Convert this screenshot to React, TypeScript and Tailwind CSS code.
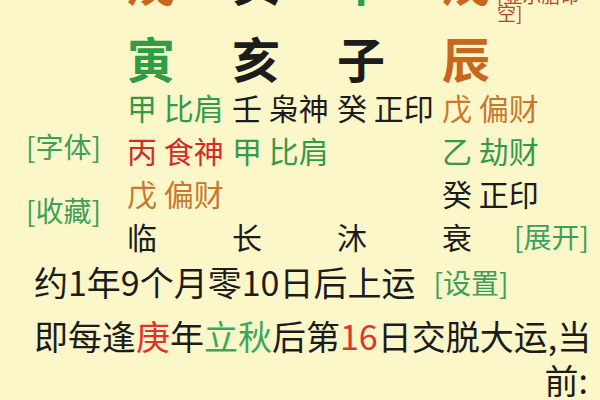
import React from "react";

const FONT = { fontFamily: '"Noto Sans CJK SC", "Noto Sans", sans-serif' };

type Cell = { s: string; sc: string; g?: string; gc?: string };

const tenRows: (Cell | null)[][] = [
  [
    { s: "甲", sc: "text-[#36994a]", g: "比肩", gc: "text-[#36994a]" },
    { s: "壬", sc: "text-[#1c1c1c]", g: "枭神", gc: "text-[#1c1c1c]" },
    { s: "癸", sc: "text-[#1c1c1c]", g: "正印", gc: "text-[#1c1c1c]" },
    { s: "戊", sc: "text-[#c8782e]", g: "偏财", gc: "text-[#c8782e]" },
  ],
  [
    { s: "丙", sc: "text-[#d12b2b]", g: "食神", gc: "text-[#d12b2b]" },
    { s: "甲", sc: "text-[#36994a]", g: "比肩", gc: "text-[#36994a]" },
    null,
    { s: "乙", sc: "text-[#36994a]", g: "劫财", gc: "text-[#36994a]" },
  ],
  [
    { s: "戊", sc: "text-[#c8782e]", g: "偏财", gc: "text-[#c8782e]" },
    null,
    null,
    { s: "癸", sc: "text-[#1c1c1c]", g: "正印", gc: "text-[#1c1c1c]" },
  ],
];

function TenCell({ c }: { c: Cell | null }) {
  return (
    <div className="w-[105px] shrink-0 whitespace-nowrap">
      {c ? (
        <>
          <span className={c.sc}>{c.s}</span>
          <span className={c.gc}> {c.g}</span>
        </>
      ) : null}
    </div>
  );
}

export default function App() {
  return (
    <div
      className="w-[600px] h-[400px] overflow-hidden bg-[#fbf7c9] text-[#1c1c1c]"
      style={FONT}
    >
      <div className="flex">
        {/* left labels */}
        <div className="w-[127px] shrink-0 flex flex-col pl-[26px] text-[28px] leading-[32px] text-[#3c9f5c]">
          <div className="mt-[130px]">[字体]</div>
          <div className="mt-[32px]">[收藏]</div>
        </div>

        {/* pillars */}
        <div className="flex flex-col">
          {/* stems row (cut off at top) */}
          <div className="flex mt-[-44px] h-[48px] text-[48px] leading-[48px] font-bold">
            <div className="w-[105px] shrink-0 text-[#c8661e]">戊</div>
            <div className="w-[105px] shrink-0 text-[#1c1c1c]">癸</div>
            <div className="w-[105px] shrink-0 text-[#2f9c46]">甲</div>
            <div className="w-[55px] shrink-0 text-[#c8661e]">戊</div>
            <div className="w-[96px] mt-[30px] text-[19px] leading-[18px] font-normal text-[#b8442a]">
              [显示胎命空]
            </div>
          </div>

          {/* branches row */}
          <div className="flex mt-[29px] h-[48px] text-[48px] leading-[48px] font-bold">
            <div className="w-[105px] shrink-0 text-[#2f9c46]">寅</div>
            <div className="w-[105px] shrink-0 text-[#1c1c1c]">亥</div>
            <div className="w-[105px] shrink-0 text-[#1c1c1c]">子</div>
            <div className="w-[105px] shrink-0 text-[#c8661e]">辰</div>
          </div>

          {/* ten gods rows */}
          <div className="flex flex-col mt-[5px] text-[30px] leading-[43px]">
            {tenRows.map((row, i) => (
              <div key={i} className="flex h-[43px]">
                {row.map((c, j) => (
                  <TenCell key={j} c={c} />
                ))}
              </div>
            ))}
            <div className="flex h-[43px] text-[#1c1c1c]">
              <div className="w-[105px] shrink-0">临</div>
              <div className="w-[105px] shrink-0">长</div>
              <div className="w-[105px] shrink-0">沐</div>
              <div className="w-[72px] shrink-0">衰</div>
              <div className="text-[28px] text-[#3c9f5c] whitespace-nowrap">[展开]</div>
            </div>
          </div>
        </div>
      </div>

      {/* bottom text */}
      <div className="pl-[34px] pr-[10px]">
        <div className="flex items-center h-[48px] whitespace-nowrap">
          <span className="text-[34px] leading-[48px]">约1年9个月零10日后上运</span>
          <span className="ml-[18px] text-[28px] leading-[48px] text-[#3c9f5c]">[设置]</span>
        </div>
        <div className="mt-[8px] text-[34px] leading-[44px]">
          <div className="whitespace-nowrap">
            即每逢<span className="text-[#e0332b]">庚</span>年
            <span className="text-[#3aa85a]">立秋</span>后第
            <span className="text-[#e0332b]">16</span>日交脱大运,当
          </div>
          <div className="text-right pr-[2px]">前:</div>
        </div>
      </div>
    </div>
  );
}
